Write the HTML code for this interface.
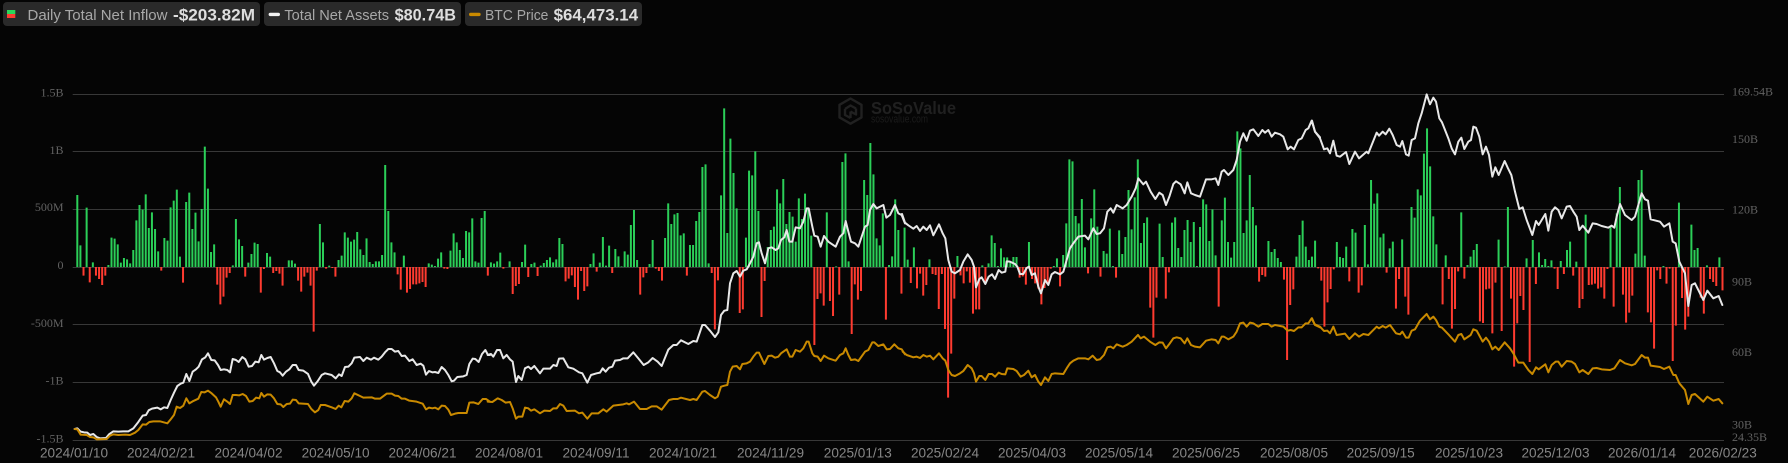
<!DOCTYPE html>
<html><head><meta charset="utf-8"><title>Bitcoin ETF Net Inflow</title>
<style>
html,body{margin:0;padding:0;background:#050505;width:1788px;height:463px;overflow:hidden}
svg{display:block;filter:blur(.3px)}
.s{font-family:"Liberation Serif",serif;font-size:12px;fill:#626262}
.x{font-family:"Liberation Sans",sans-serif;font-size:13.6px;fill:#868686;text-anchor:middle}
.l{font-family:"Liberation Sans",sans-serif;font-size:14.8px;fill:#a8a8a8}
.v{font-family:"Liberation Sans",sans-serif;font-size:17px;font-weight:bold;fill:#dedede}
</style></head><body>
<svg width="1788" height="463" viewBox="0 0 1788 463" xmlns="http://www.w3.org/2000/svg">
<rect width="1788" height="463" fill="#050505"/>
<!-- legend -->
<rect x="3" y="2" width="257" height="24" rx="4" fill="#2a2a2a"/>
<rect x="264" y="2" width="197" height="24" rx="4" fill="#2a2a2a"/>
<rect x="465" y="2" width="177" height="24" rx="4" fill="#2a2a2a"/>
<rect x="7" y="10" width="8.3" height="4" fill="#2bd65a"/>
<rect x="7" y="14" width="8.3" height="4" fill="#ff3b30"/>
<rect x="268.6" y="12.7" width="11.4" height="3.4" rx="1.7" fill="#f0f0f0"/>
<rect x="469" y="12.7" width="11.7" height="3.4" rx="1.7" fill="#c98a00"/>
<text class="l" x="27.5" y="20" textLength="140" lengthAdjust="spacingAndGlyphs">Daily Total Net Inflow</text>
<text class="v" x="173" y="20.5" textLength="82" lengthAdjust="spacingAndGlyphs">-$203.82M</text>
<text class="l" x="284.4" y="20" textLength="104.6" lengthAdjust="spacingAndGlyphs">Total Net Assets</text>
<text class="v" x="394.6" y="20.5" textLength="61.4" lengthAdjust="spacingAndGlyphs">$80.74B</text>
<text class="l" x="485" y="20" textLength="63.4" lengthAdjust="spacingAndGlyphs">BTC Price</text>
<text class="v" x="553.6" y="20.5" textLength="84.5" lengthAdjust="spacingAndGlyphs">$64,473.14</text>
<!-- grid -->
<path d="M72.7 94.5H1724M72.7 151.5H1724M72.7 209.5H1724M72.7 267.5H1724M72.7 324.5H1724M72.7 382.5H1724M72.7 440.5H1724" stroke="#383838" stroke-width="1" fill="none"/>
<!-- watermark -->
<g fill="none" stroke="#212121" stroke-width="2.4" stroke-linejoin="round">
<path d="M850.5 98.5L861.5 104.8V117.4L850.5 123.7L839.5 117.4V104.8Z"/>
<path d="M845 109L850.5 105.5L856 108.5M845 109V115L850.5 118M850.5 111.5L856 114.5V108.5M850.5 111.5V118"/>
</g>
<text x="871" y="114" font-family="Liberation Sans,sans-serif" font-weight="bold" font-size="17.5" fill="#202020" textLength="85" lengthAdjust="spacingAndGlyphs">SoSoValue</text>
<text x="871" y="122.7" font-family="Liberation Sans,sans-serif" font-size="11" fill="#1c1c1c" textLength="57" lengthAdjust="spacingAndGlyphs">sosovalue.com</text>
<!-- bars -->
<g transform="translate(77.3 267) scale(3.11 .33333)" fill="none" stroke-width=".643">
<path stroke="#2bcf58" d="M0 0V-216M1 0V-65M3 0V-178M5 0V-14M10 0V-6M11 0V-88M12 0V-85M13 0V-68M14 0V-13M15 0V-27M16 0V-23M17 0V-11M18 0V-51M19 0V-140M20 0V-186M21 0V-172M22 0V-218M23 0V-117M24 0V-164M25 0V-114M26 0V-47M28 0V-87M29 0V-79M30 0V-179M31 0V-199M32 0V-232M33 0V-31M35 0V-195M36 0V-223M37 0V-114M38 0V-163M39 0V-77M40 0V-174M41 0V-361M42 0V-235M43 0V-45M44 0V-68M50 0V-5M51 0V-144M52 0V-83M53 0V-63M55 0V-13M56 0V-39M57 0V-73M58 0V-69M61 0V-42M62 0V-31M68 0V-20M69 0V-20M70 0V-10M78 0V-129M79 0V-74M81 0V-4M84 0V-21M85 0V-34M86 0V-104M87 0V-88M88 0V-76M89 0V-82M90 0V-105M91 0V-53M92 0V-36M93 0V-86M94 0V-15M95 0V-9M96 0V-17M97 0V-17M98 0V-36M99 0V-306M100 0V-168M101 0V-74M102 0V-44M105 0V-34M113 0V-11M114 0V-7M115 0V-3M116 0V-25M117 0V-44M120 0V-49M121 0V-101M122 0V-74M123 0V-51M124 0V-27M125 0V-108M126 0V-104M127 0V-146M128 0V-17M129 0V-13M130 0V-147M131 0V-168M133 0V-14M134 0V-10M135 0V-17M136 0V-43M139 0V-17M143 0V-15M144 0V-67M146 0V-9M147 0V-13M149 0V-4M150 0V-12M151 0V-21M152 0V-29M153 0V-14M154 0V-23M155 0V-87M156 0V-69M165 0V-9M166 0V-41M168 0V-13M169 0V-90M170 0V-4M171 0V-64M173 0V-54M174 0V-32M175 0V-2M176 0V-47M177 0V-37M178 0V-126M179 0V-171M180 0V-21M184 0V-9M185 0V-81M189 0V-87M190 0V-191M191 0V-129M192 0V-158M193 0V-162M194 0V-95M195 0V-101M197 0V-66M198 0V-66M199 0V-138M200 0V-165M201 0V-300M202 0V-308M203 0V-11M207 0V-215M208 0V-476M209 0V-102M210 0V-385M211 0V-282M212 0V-176M215 0V-88M216 0V-289M217 0V-275M218 0V-347M219 0V-168M222 0V-60M223 0V-111M224 0V-121M225 0V-233M226 0V-191M227 0V-264M228 0V-129M229 0V-165M230 0V-151M231 0V-76M232 0V-206M233 0V-144M234 0V-220M235 0V-176M236 0V-94M241 0V-164M244 0V-2M246 0V-315M247 0V-341M248 0V-17M253 0V-261M254 0V-216M255 0V-372M256 0V-278M257 0V-86M258 0V-65M259 0V-161M261 0V-6M262 0V-32M263 0V-203M264 0V-111M266 0V-118M267 0V-22M269 0V-59M274 0V-23M283 0V-33M291 0V-5M293 0V-11M294 0V-95M295 0V-72M296 0V-3M297 0V-56M298 0V-29M299 0V-29M300 0V-16M301 0V-30M302 0V-30M306 0V-75M314 0V-3M315 0V-26M317 0V-36M318 0V-131M319 0V-323M320 0V-317M321 0V-153M322 0V-131M323 0V-204M324 0V-59M326 0V-146M327 0V-233M328 0V-121M330 0V-48M331 0V-40M332 0V-115M333 0V-3M335 0V-110M336 0V-39M337 0V-90M338 0V-231M339 0V-113M340 0V-209M341 0V-323M342 0V-72M343 0V-132M344 0V-149M348 0V-130M349 0V-30M352 0V-133M353 0V-149M354 0V-57M355 0V-30M356 0V-111M357 0V-141M358 0V-75M359 0V-135M360 0V-3M361 0V-120M362 0V-203M363 0V-188M364 0V-78M365 0V-173M366 0V-35M368 0V-140M369 0V-208M370 0V-75M371 0V-28M372 0V-75M373 0V-407M374 0V-356M375 0V-102M376 0V-140M377 0V-276M378 0V-180M379 0V-125M383 0V-78M384 0V-45M385 0V-54M386 0V-27M387 0V-15M392 0V-31M393 0V-96M394 0V-139M395 0V-61M396 0V-21M397 0V-31M398 0V-79M405 0V-75M406 0V-30M407 0V-27M408 0V-61M410 0V-114M411 0V-103M414 0V-126M415 0V-8M416 0V-261M417 0V-190M418 0V-221M419 0V-89M420 0V-100M422 0V-56M423 0V-76M426 0V-83M429 0V-180M430 0V-148M431 0V-233M432 0V-215M433 0V-340M434 0V-416M435 0V-302M436 0V-152M437 0V-68M440 0V-35M445 0V-164M447 0V-6M448 0V-31M449 0V-51M450 0V-69M457 0V-82M459 0V-2M460 0V-180M466 0V-26M468 0V-81M470 0V-44M471 0V-6M472 0V-24M473 0V-3M474 0V-20M477 0V-18M479 0V-51M480 0V-76M482 0V-16M485 0V-157M493 0V-121M495 0V-161M496 0V-240M501 0V-40M502 0V-261M503 0V-291M504 0V-34M510 0V-3M515 0V-193M519 0V-127M520 0V-51M521 0V-57M524 0V-5M528 0V-29"/>
<path stroke="#ff3b30" d="M2 0V26M4 0V46M6 0V26M7 0V36M8 0V54M9 0V26M27 0V11M34 0V47M45 0V53M46 0V112M47 0V89M48 0V32M49 0V18M54 0V29M59 0V77M60 0V6M63 0V18M64 0V12M65 0V20M66 0V56M71 0V41M72 0V74M73 0V29M74 0V17M75 0V56M76 0V194M77 0V11M80 0V5M82 0V3M83 0V29M103 0V22M104 0V68M106 0V77M107 0V66M108 0V52M109 0V52M110 0V49M111 0V45M112 0V60M118 0V5M119 0V6M132 0V26M137 0V5M140 0V81M141 0V57M142 0V51M145 0V30M148 0V27M157 0V43M158 0V35M159 0V25M160 0V60M161 0V98M162 0V12M163 0V72M164 0V58M167 0V14M172 0V18M181 0V83M182 0V31M183 0V18M186 0V5M187 0V12M188 0V41M196 0V26M204 0V18M205 0V187M206 0V40M213 0V138M214 0V127M220 0V150M221 0V42M237 0V234M238 0V96M239 0V79M240 0V116M242 0V102M243 0V147M245 0V83M249 0V201M250 0V52M251 0V98M252 0V72M260 0V158M265 0V80M268 0V48M270 0V64M271 0V20M272 0V86M273 0V54M275 0V21M276 0V24M277 0V126M278 0V21M279 0V186M280 0V392M281 0V260M282 0V95M284 0V25M285 0V49M286 0V13M287 0V47M288 0V140M289 0V127M290 0V127M292 0V46M303 0V32M304 0V28M305 0V53M307 0V36M308 0V49M309 0V65M310 0V112M311 0V63M312 0V50M313 0V5M316 0V58M325 0V19M329 0V29M334 0V32M345 0V122M346 0V212M347 0V92M350 0V95M351 0V16M367 0V119M380 0V44M381 0V24M382 0V29M388 0V38M389 0V279M390 0V114M391 0V67M399 0V4M400 0V41M401 0V179M402 0V106M403 0V66M404 0V7M409 0V43M412 0V77M413 0V55M421 0V17M424 0V125M425 0V36M427 0V89M428 0V143M439 0V112M441 0V36M442 0V185M443 0V126M444 0V13M446 0V35M451 0V163M452 0V168M453 0V67M454 0V65M455 0V199M456 0V47M458 0V192M461 0V95M462 0V299M463 0V169M464 0V87M465 0V129M467 0V285M469 0V51M475 0V5M476 0V66M478 0V21M481 0V26M483 0V123M484 0V96M486 0V54M487 0V53M488 0V50M489 0V65M490 0V61M491 0V95M492 0V6M494 0V119M497 0V83M498 0V167M499 0V137M500 0V86M505 0V136M506 0V166M507 0V245M508 0V10M509 0V36M511 0V50M512 0V5M513 0V282M514 0V176M516 0V93M517 0V188M518 0V149M522 0V92M523 0V140M525 0V36M526 0V45M527 0V57M529 0V70"/>
</g>
<!-- lines -->
<g fill="none" stroke-width="6" stroke-linejoin="round" stroke-linecap="round">
<g transform="translate(70 100) scale(.33333)">
<path stroke="#e8e8e8" d="M14 987L22 985 32 995 42 997 52 998 60 1005 70 1002 80 1011 90 1015 108 1014 117 1003 130 994 145 995 160 994 175 994 190 985 205 966 218 947 228 945 236 931 246 926 262 923 272 928 282 922 292 924 302 900 312 878 322 858 332 851 340 848 349 822 358 843 368 815 378 808 386 800 396 778 406 772 414 760 424 780 434 781 444 795 452 810 462 808 472 810 480 817 488 777 498 780 506 786 517 771 526 778 536 800 546 798 556 785 566 787 574 765 582 779 592 774 602 771 612 790 622 813 630 817 638 827 648 815 658 808 668 795 678 795 686 810 700 812 714 822 724 845 732 857 742 845 755 825 765 820 785 825 797 835 807 823 815 828 825 801 835 800 845 790 853 773 870 771 880 783 890 773 903 779 912 773 925 779 935 770 945 757 955 747 965 747 975 755 985 753 995 768 1005 767 1018 783 1028 778 1040 795 1052 791 1060 797 1068 824 1077 813 1087 817 1095 816 1105 819 1115 801 1125 810 1135 825 1145 844 1152 842 1162 831 1180 829 1190 825 1198 792 1208 776 1216 777 1226 786 1236 762 1246 750 1254 765 1260 765"/>
<path stroke="#c98a00" d="M14 987L22 988 32 1004 50 1005 60 1011 70 1012 80 1018 110 1017 120 1007 130 1003 145 1005 165 1004 180 1005 195 998 205 990 218 973 228 974 238 966 250 964 270 964 292 970 302 958 312 945 320 920 330 924 340 917 349 895 358 910 368 904 385 896 394 876 404 877 414 872 425 880 438 892 445 905 452 920 462 898 472 905 480 912 488 885 498 885 508 886 518 882 528 888 538 905 548 903 558 893 568 895 574 879 582 890 592 883 602 884 612 895 622 912 632 913 640 921 650 912 660 911 668 899 678 900 686 910 714 912 724 927 735 937 745 930 752 915 765 915 785 922 797 927 806 917 814 922 824 903 835 905 845 895 853 880 870 888 880 893 905 892 915 896 930 896 950 881 965 881 975 887 985 888 995 896 1005 896 1018 902 1040 905 1058 911 1068 928 1077 923 1087 925 1095 923 1105 928 1115 917 1125 918 1135 929 1143 945 1155 941 1165 939 1190 939 1198 908 1210 907 1225 912 1238 897 1248 897 1260 905"/>
</g>
<g transform="translate(485 100) scale(.33333)">
<path stroke="#e8e8e8" d="M8 765L18 762 25 770 36 750 45 750 55 775 65 765 75 778 83 785 93 846 100 828 110 840 120 805 130 800 138 807 148 798 165 820 175 806 195 806 205 795 215 798 222 776 235 775 250 802 265 806 282 817 292 820 307 848 318 825 335 820 345 818 353 805 362 815 372 803 382 800 390 782 405 780 415 775 428 775 445 757 460 775 476 795 490 787 503 774 518 785 530 798 550 749 565 735 575 735 588 721 610 732 625 723 635 725 652 675 660 675 675 692 690 711 700 697 708 645 718 632 727 630 735 550 745 520 755 513 765 530 775 512 785 508 795 490 805 470 815 430 822 427 830 460 840 490 850 445 860 442 872 450 880 445 888 420 898 412 905 390 913 425 922 425 932 382 945 385 955 365 965 325 971 325 982 380 988 407 998 410 1007 440 1017 408 1030 425 1052 440 1065 410 1075 400 1082 363 1090 395 1098 425 1110 430 1120 440 1140 380 1148 375 1155 330 1165 312 1175 325 1195 315 1204 353 1215 345 1230 315 1240 340 1250 345 1260 370"/>
<path stroke="#c98a00" d="M8 905L22 906 38 895 50 900 62 908 75 906 83 925 93 956 100 950 112 950 120 923 130 925 138 932 148 928 165 940 178 932 195 933 205 925 215 925 225 912 235 917 245 933 270 932 282 940 292 938 307 956 320 940 340 940 355 928 365 935 385 917 415 913 425 910 432 913 447 905 465 927 485 927 500 919 515 919 530 929 552 900 565 897 578 897 588 893 615 900 625 897 635 900 652 875 660 873 675 885 690 895 698 890 708 860 718 857 727 855 735 815 743 800 755 798 765 808 772 792 785 790 795 785 805 770 815 758 822 758 830 775 838 792 850 768 860 767 870 773 880 770 888 760 905 748 915 770 922 770 932 750 945 755 955 745 965 725 971 725 982 760 988 768 998 770 1007 783 1017 767 1030 775 1052 782 1065 765 1075 760 1082 745 1090 765 1098 780 1110 778 1120 783 1140 755 1150 750 1162 727 1168 727 1180 738 1195 733 1205 748 1215 747 1228 733 1240 745 1250 748 1260 763"/>
</g>
<g transform="translate(900 90) scale(.33333)">
<path stroke="#e8e8e8" d="M6 372L15 398 25 406 40 416 50 408 60 423 70 410 80 420 90 406 100 436 117 403 128 430 136 445 145 510 155 545 165 550 180 540 190 515 203 493 215 510 222 530 228 592 238 567 245 562 256 582 266 560 276 553 285 567 296 540 305 548 316 545 320 514 330 515 345 522 352 530 360 552 370 552 380 534 387 530 395 555 405 550 415 590 423 610 435 570 445 585 455 553 465 546 480 553 490 545 500 510 510 475 520 460 535 440 555 437 565 448 580 415 590 432 600 430 612 415 622 365 632 355 640 368 650 345 668 355 680 345 695 320 707 295 715 265 730 283 738 275 752 305 766 327 778 308 788 315 798 345 808 320 820 282 828 274 842 283 854 310 862 277 873 310 885 315 900 320 918 268 935 268 947 265 955 285 965 245 972 240 985 255 1000 240 1010 210 1020 155 1030 130 1040 152 1050 122 1060 118 1075 138 1087 120 1095 128 1105 120 1115 140 1125 128 1140 133 1150 140 1163 178 1172 170 1182 178 1195 150 1205 145 1217 120 1225 115 1235 92 1245 125 1260 142"/>
<path stroke="#c98a00" d="M8 785L20 795 40 802 50 800 60 804 70 795 80 800 90 797 100 808 117 790 128 805 136 812 145 840 155 855 165 858 180 850 190 843 203 825 215 835 222 850 228 875 238 858 245 858 256 870 266 852 276 852 285 860 296 848 305 852 316 853 322 835 340 837 350 843 362 860 372 855 385 842 395 862 405 855 415 875 423 885 435 862 445 873 455 852 465 850 490 852 500 835 510 820 520 812 535 805 555 805 565 808 578 797 590 810 600 808 612 795 622 772 632 770 640 775 650 763 668 770 680 765 695 755 714 735 722 745 732 740 750 755 766 765 778 757 788 758 798 775 808 762 820 745 830 742 842 745 854 760 862 745 873 765 885 770 900 772 918 752 935 748 947 750 955 760 965 740 972 740 985 748 1000 740 1010 725 1020 700 1030 698 1040 710 1050 698 1060 700 1075 710 1087 702 1105 702 1115 710 1125 705 1150 710 1163 722 1172 720 1182 723 1195 712 1205 712 1217 700 1225 700 1235 685 1245 705 1260 712"/>
</g>
<g transform="translate(1310 90) scale(.33333)">
<path stroke="#e8e8e8" d="M6 92L15 125 30 145 42 178 52 175 60 190 70 152 80 197 90 200 108 186 118 222 135 185 147 205 170 185 175 190 185 165 200 128 207 137 218 125 227 133 238 116 248 135 260 165 270 170 277 153 288 193 296 197 305 150 315 145 325 100 335 70 350 13 360 43 370 23 378 35 388 85 396 97 415 145 425 175 435 193 445 155 454 143 463 177 475 155 483 150 490 110 498 113 508 140 518 193 528 170 537 195 547 260 556 232 566 255 584 213 594 235 604 255 615 305 628 357 638 352 650 390 667 435 678 393 686 405 706 372 715 422 725 365 735 352 745 360 755 385 770 350 780 348 790 365 800 380 808 420 818 407 835 428 848 400 860 402 875 408 895 413 905 407 913 413 920 380 930 342 945 375 965 390 975 380 985 345 995 310 1005 328 1014 332 1022 388 1050 395 1062 410 1078 400 1088 455 1097 460 1108 515 1125 550 1135 648 1145 585 1155 580 1180 630 1192 602 1210 625 1226 618 1237 645"/>
<path stroke="#c98a00" d="M6 685L14 703 30 710 42 723 52 722 60 730 70 710 80 735 105 731 118 747 135 730 147 740 160 732 175 735 185 725 200 710 207 715 218 708 227 713 240 705 258 730 270 733 277 725 288 743 296 743 305 722 315 718 330 692 350 672 360 688 370 680 378 690 388 710 396 713 415 733 435 755 445 735 454 732 463 748 482 735 490 718 500 722 518 755 528 743 537 755 547 778 556 770 566 780 584 757 600 775 610 790 625 818 640 818 655 840 667 852 678 832 686 838 706 823 715 847 725 825 737 815 745 815 755 830 770 813 785 815 795 822 808 847 818 840 835 852 848 835 860 834 875 838 900 840 913 835 930 810 945 820 965 826 975 822 995 795 1005 803 1014 803 1022 827 1050 831 1062 837 1078 830 1090 855 1097 855 1108 880 1125 900 1135 942 1145 915 1155 912 1180 935 1192 920 1210 932 1226 927 1237 940"/>
</g>
</g>
<!-- left axis -->
<g class="s" text-anchor="end">
<text x="63.5" y="96.5">1.5B</text><text x="63.5" y="154">1B</text><text x="63.5" y="211">500M</text><text x="63.5" y="269">0</text><text x="63.5" y="327">-500M</text><text x="63.5" y="384.5">-1B</text><text x="63.5" y="442.5">-1.5B</text>
</g>
<!-- right axis -->
<g class="s">
<text x="1732" y="95.5">169.54B</text><text x="1732" y="143">150B</text><text x="1732" y="213.5">120B</text><text x="1732" y="285.5">90B</text><text x="1732" y="356">60B</text><text x="1732" y="428.5">30B</text><text x="1732" y="441">24.35B</text>
</g>
<!-- x axis -->
<g class="x">
<text x="74" y="457.5">2024/01/10</text><text x="161" y="457.5">2024/02/21</text><text x="248.5" y="457.5">2024/04/02</text><text x="335.6" y="457.5">2024/05/10</text><text x="422.5" y="457.5">2024/06/21</text><text x="509" y="457.5">2024/08/01</text><text x="596" y="457.5">2024/09/11</text><text x="683" y="457.5">2024/10/21</text><text x="770.5" y="457.5">2024/11/29</text><text x="857.8" y="457.5">2025/01/13</text><text x="945" y="457.5">2025/02/24</text><text x="1032" y="457.5">2025/04/03</text><text x="1119" y="457.5">2025/05/14</text><text x="1206" y="457.5">2025/06/25</text><text x="1294" y="457.5">2025/08/05</text><text x="1380.7" y="457.5">2025/09/15</text><text x="1469" y="457.5">2025/10/23</text><text x="1555.5" y="457.5">2025/12/03</text><text x="1642" y="457.5">2026/01/14</text><text x="1722.8" y="457.5">2026/02/23</text>
</g>
</svg>
</body></html>
